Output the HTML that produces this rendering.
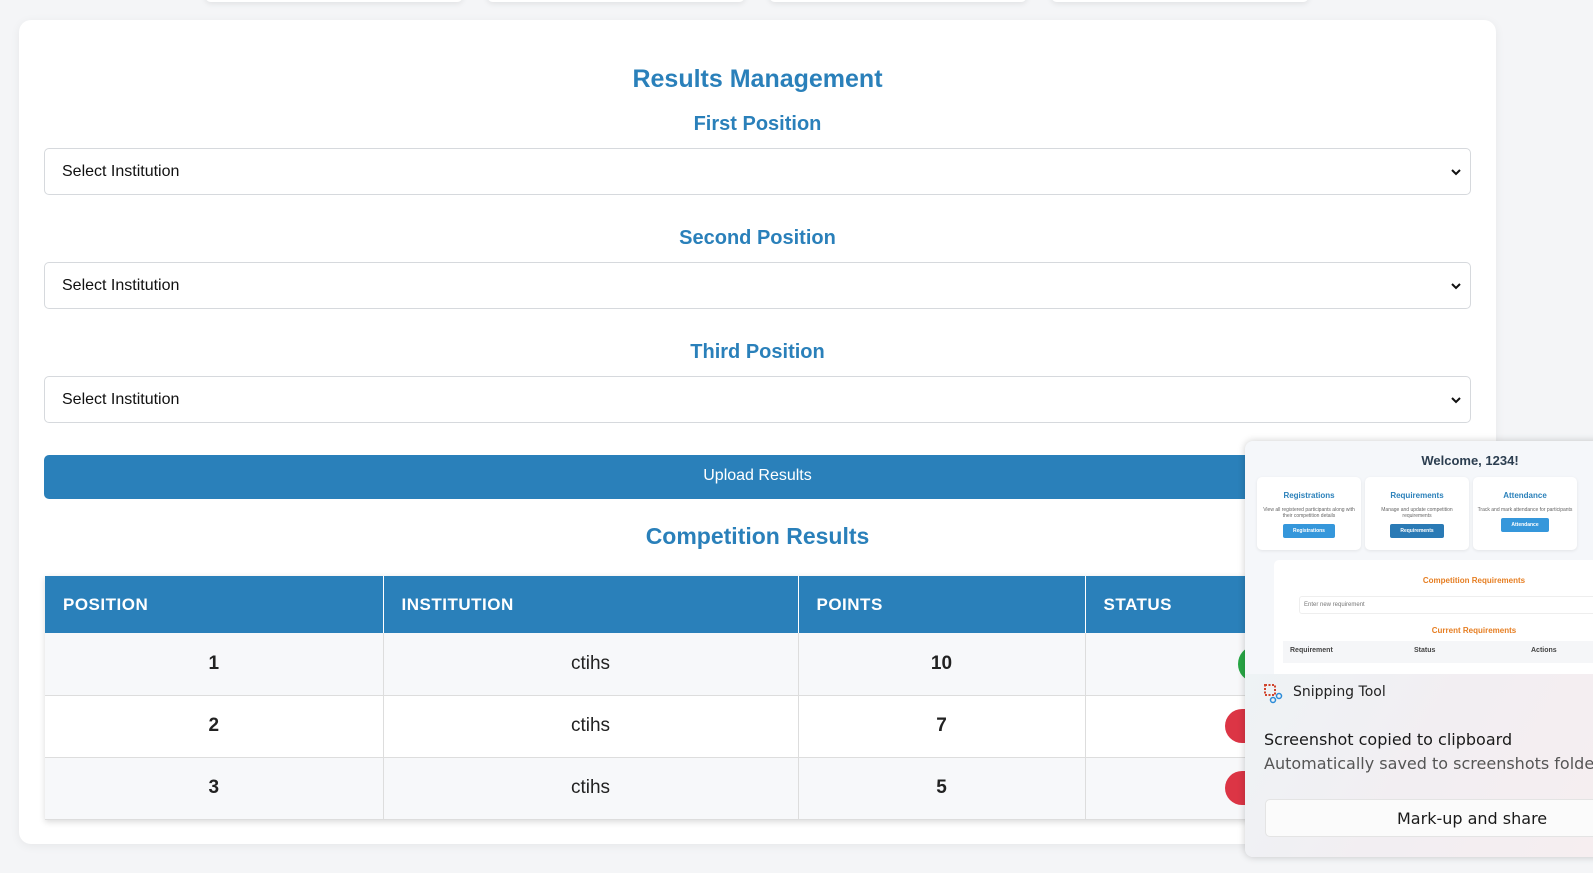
<!DOCTYPE html>
<html><head><meta charset="utf-8"><style>
*{box-sizing:border-box;margin:0;padding:0}
body{width:1593px;height:873px;background:#f4f5f7;font-family:"Liberation Sans",Arial,sans-serif;position:relative;overflow:hidden}
.tops{position:absolute;top:-10px;height:12px;background:#fff;border-radius:8px;box-shadow:0 2px 6px rgba(0,0,0,.08)}
.card{position:absolute;left:19px;top:20px;width:1477px;height:824px;background:#fff;border-radius:12px;box-shadow:0 2px 10px rgba(0,0,0,.06)}
h2{position:absolute;left:0;width:100%;text-align:center;color:#2a80ba;font-weight:bold}
.sel{position:absolute;left:25px;width:1427px;height:47px;border:1px solid #d6d9dd;border-radius:5px;font-size:16px;padding:14px 17px;color:#111}
.sel svg{position:absolute;right:8px;top:18px}
.btn{position:absolute;left:25px;top:435px;width:1427px;height:44px;background:#2a80ba;border-radius:5px;color:#fff;text-align:center;line-height:42px;font-size:16px}
table{position:absolute;left:26px;top:556px;width:1426px;border-collapse:collapse;box-shadow:0 2px 6px rgba(0,0,0,.15)}
th{background:#2a80ba;color:#fff;text-align:left;padding-left:18px;height:57px;font-size:17px;letter-spacing:.5px;border-right:1px solid #fff}
td{height:62px;text-align:center;font-size:19px;color:#222;border-right:1px solid #ddd;border-bottom:1px solid #ddd}
tr.a td{background:#f7f8fa}
.pop{position:absolute;left:1245px;top:441px;width:360px;height:416px;border-radius:8px 0 0 8px;overflow:hidden;box-shadow:0 0 8px rgba(0,0,0,.2);background:#f5f7fa}
.mc{position:absolute;top:36px;width:104px;height:73px;background:#fff;border-radius:5px;text-align:center;box-shadow:0 1px 3px rgba(0,0,0,.08)}
.mc b{display:block;color:#2a80ba;font-size:8px;margin-top:14px}
.mc p{font-size:5px;color:#666;margin:7px 4px 0;line-height:6px}
.mc i{display:inline-block;font-style:normal;background:#3597db;color:#fff;font-size:5px;font-weight:bold;padding:4px 10px;margin-top:4px;border-radius:2px}
.notif{position:absolute;left:0;top:233px;width:360px;height:183px;background:linear-gradient(120deg,#eef3f5,#f2eef2 50%,#f6eef0);font-family:"DejaVu Sans",sans-serif}
</style></head><body>
<div class="tops" style="left:205px;width:258px"></div><div class="tops" style="left:487px;width:258px"></div><div class="tops" style="left:769px;width:258px"></div><div class="tops" style="left:1051px;width:258px"></div>
<div class="card">
<h2 style="top:45px;font-size:25px">Results Management</h2>
<h2 style="top:93px;font-size:20px">First Position</h2>
<div class="sel" style="top:128px">Select Institution<svg width="12" height="10" viewBox="0 0 12 10"><path d="M2 3l4 4 4-4" stroke="#111" stroke-width="2" fill="none"/></svg></div>
<h2 style="top:207px;font-size:20px">Second Position</h2>
<div class="sel" style="top:242px">Select Institution<svg width="12" height="10" viewBox="0 0 12 10"><path d="M2 3l4 4 4-4" stroke="#111" stroke-width="2" fill="none"/></svg></div>
<h2 style="top:321px;font-size:20px">Third Position</h2>
<div class="sel" style="top:356px">Select Institution<svg width="12" height="10" viewBox="0 0 12 10"><path d="M2 3l4 4 4-4" stroke="#111" stroke-width="2" fill="none"/></svg></div>
<div class="btn">Upload Results</div>
<h2 style="top:503px;font-size:23px">Competition Results</h2>
<table>
<tr><th style="width:338px">POSITION</th><th style="width:415px">INSTITUTION</th><th style="width:287px">POINTS</th><th>STATUS</th></tr>
<tr class="a"><td><b>1</b></td><td>ctihs</td><td><b>10</b></td><td></td></tr>
<tr><td><b>2</b></td><td>ctihs</td><td><b>7</b></td><td></td></tr>
<tr class="a"><td><b>3</b></td><td>ctihs</td><td><b>5</b></td><td></td></tr>
</table>
</div>
<div style="position:absolute;left:1238px;top:647px;width:30px;height:34px;border-radius:50%;background:#28a745"></div>
<div style="position:absolute;left:1225px;top:709px;width:40px;height:34px;border-radius:17px;background:#dc3545"></div>
<div style="position:absolute;left:1225px;top:771px;width:40px;height:34px;border-radius:17px;background:#dc3545"></div>
<div class="pop">
<div style="position:absolute;top:12px;left:0;width:450px;text-align:center;font-weight:bold;font-size:13px;color:#2c3e50">Welcome, 1234!</div>
<div class="mc" style="left:12px"><b>Registrations</b><p>View all registered participants along with their competition details</p><i>Registrations</i></div>
<div class="mc" style="left:120px"><b>Requirements</b><p>Manage and update competition requirements</p><i style="background:#2a7ab5">Requirements</i></div>
<div class="mc" style="left:228px"><b>Attendance</b><p>Track and mark attendance for participants</p><i>Attendance</i></div>
<div style="position:absolute;left:29px;top:119px;width:340px;height:120px;background:#fff;border-radius:5px">
<div style="position:absolute;top:16px;left:0;width:400px;text-align:center;color:#e67e22;font-size:8px;font-weight:bold">Competition Requirements</div>
<div style="position:absolute;top:36px;left:25px;width:320px;height:18px;border:1px solid #eee;border-radius:3px;font-size:6px;color:#777;padding:5px 4px">Enter new requirement</div>
<div style="position:absolute;top:66px;left:0;width:400px;text-align:center;color:#e67e22;font-size:8px;font-weight:bold">Current Requirements</div>
<div style="position:absolute;top:81px;left:9px;width:330px;height:22px;background:#f5f6f8;font-size:7px;font-weight:bold;color:#444;padding:6px 7px">Requirement<span style="position:absolute;left:131px">Status</span><span style="position:absolute;left:248px">Actions</span></div>
</div>
<div class="notif">
<svg style="position:absolute;left:19px;top:10px" width="20" height="20" viewBox="0 0 20 20"><rect x="1" y="1" width="10" height="10" fill="none" stroke="#d0442c" stroke-width="2" stroke-dasharray="2 1.5"/><circle cx="9" cy="16" r="2.5" fill="none" stroke="#2a8bd8" stroke-width="1.5"/><circle cx="15" cy="12" r="2.5" fill="none" stroke="#2a8bd8" stroke-width="1.5"/></svg>
<div style="position:absolute;left:48px;top:10px;font-size:14px;color:#222">Snipping Tool</div>
<div style="position:absolute;left:19px;top:56px;font-size:16px;color:#1a1a1a;white-space:nowrap">Screenshot copied to clipboard</div>
<div style="position:absolute;left:19px;top:80px;font-size:16px;color:#555;white-space:nowrap">Automatically saved to screenshots folder</div>
<div style="position:absolute;left:20px;top:125px;width:340px;height:38px;background:#fbfbfb;border:1px solid #e4e4e4;border-radius:5px;font-size:16px;color:#1a1a1a;padding:9px 0 0 131px;white-space:nowrap">Mark-up and share</div>
</div>
</div>
</body></html>
